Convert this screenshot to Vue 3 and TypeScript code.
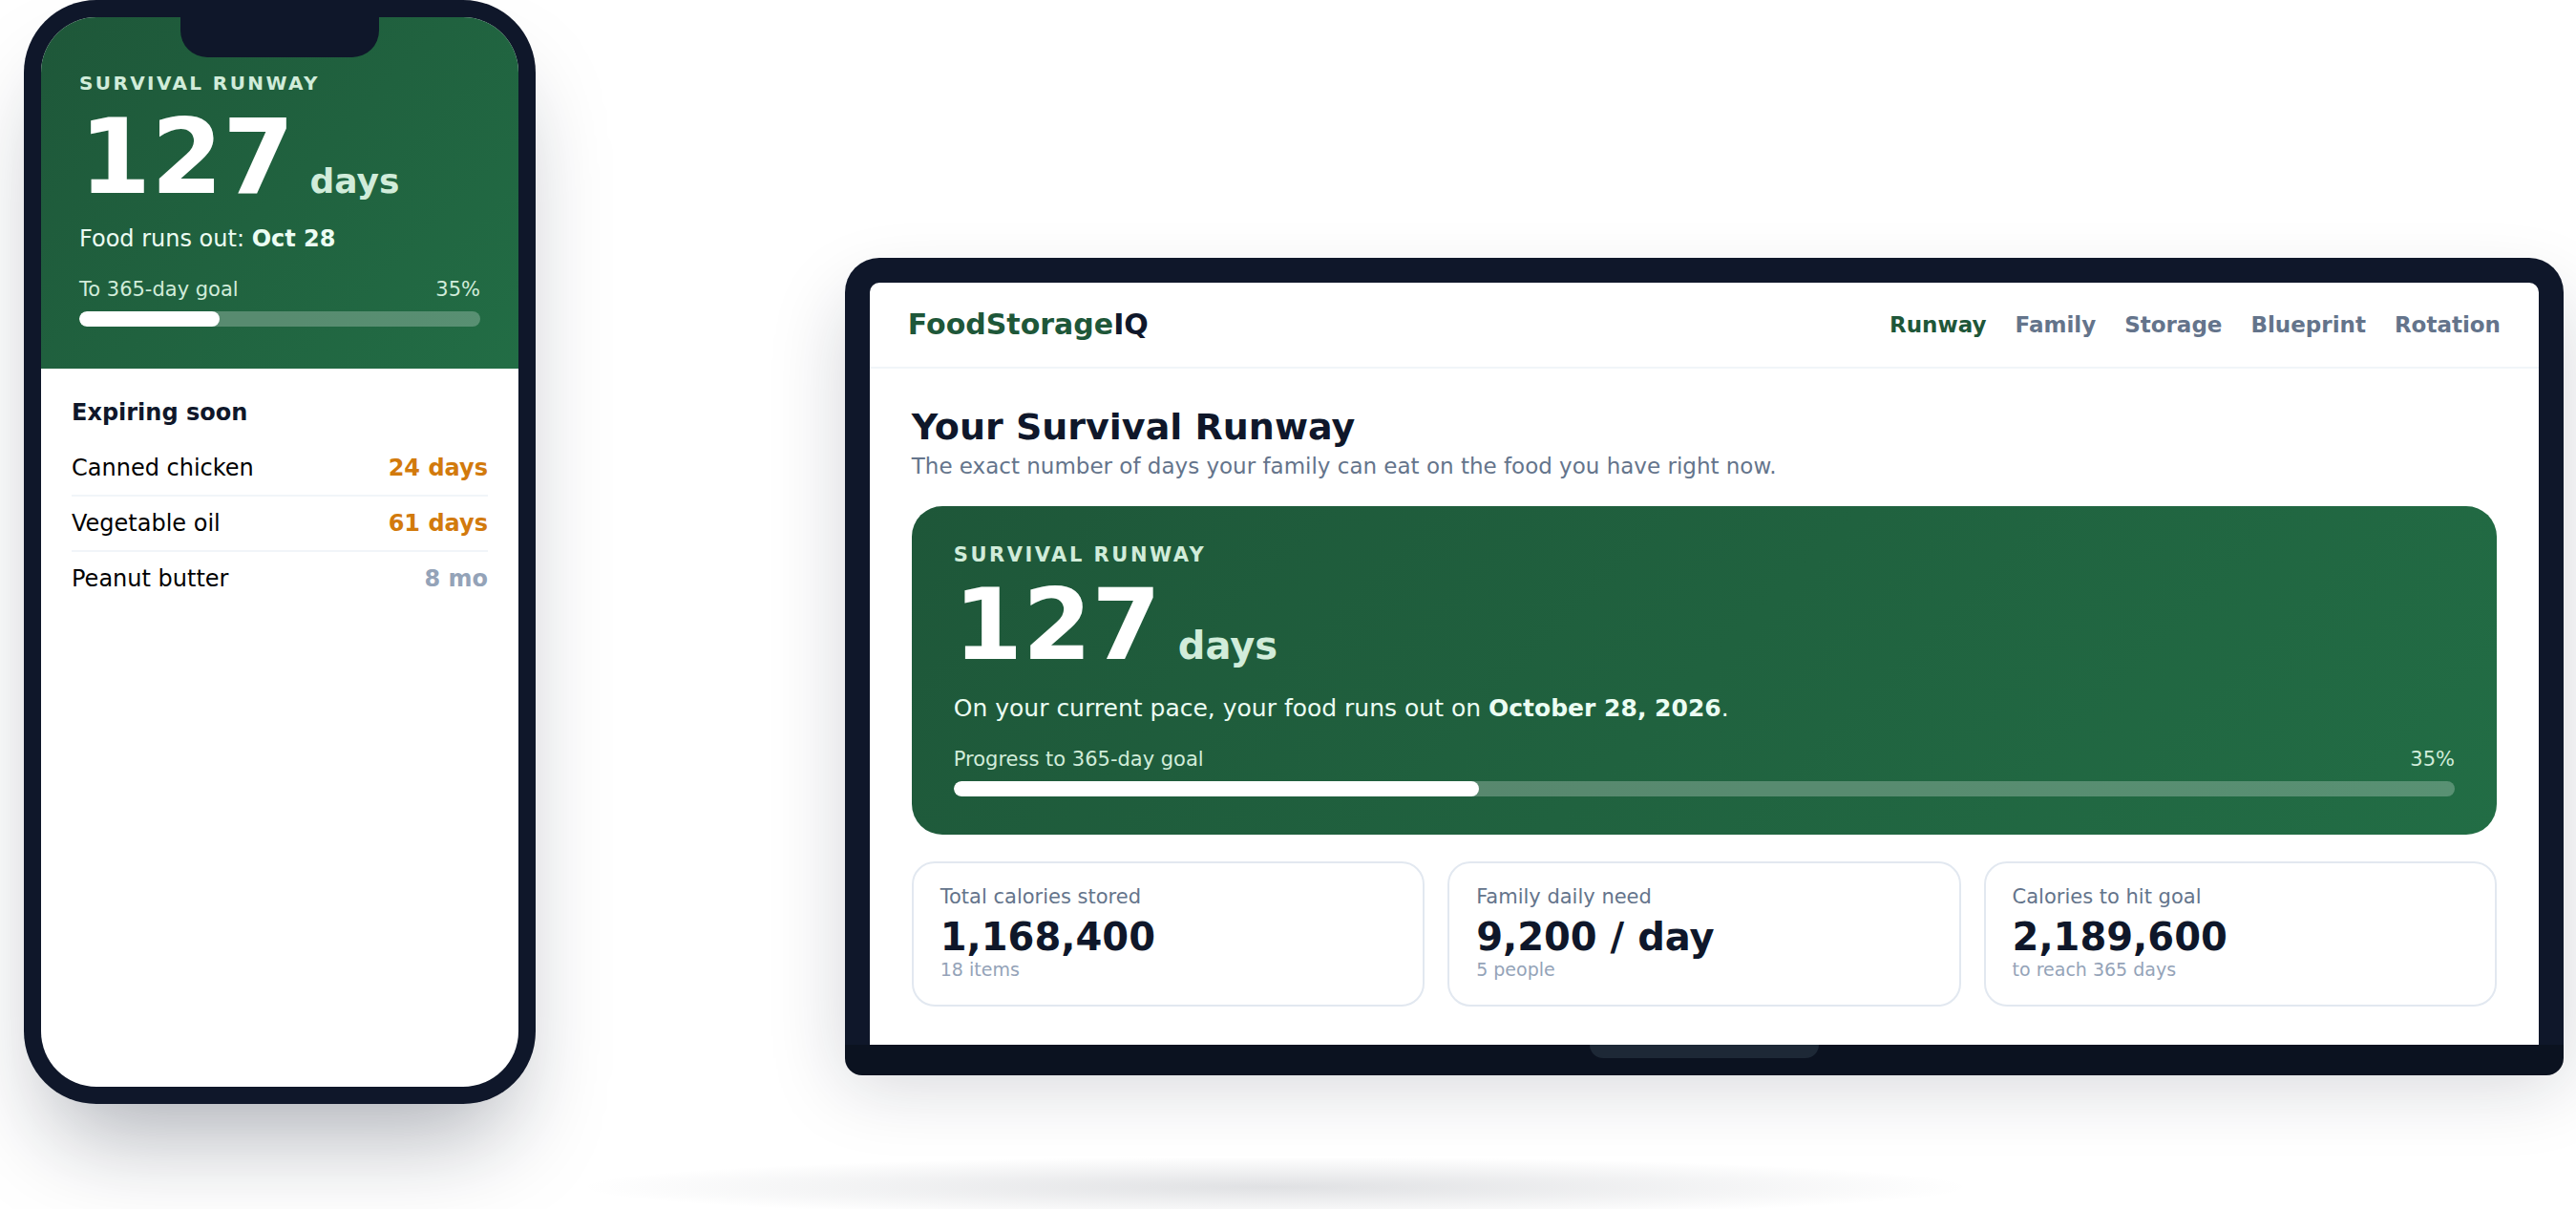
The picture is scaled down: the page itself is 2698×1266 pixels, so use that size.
<script setup lang="ts">
interface NavLink {
  label: string
  href: string
  active?: boolean
}

interface ExpiringItem {
  name: string
  left: string
  soon: boolean
}

interface Stat {
  label: string
  value: string
  note: string
}

const goalPercent = 35

const links: NavLink[] = [
  { label: 'Runway', href: '#runway', active: true },
  { label: 'Family', href: '#family' },
  { label: 'Storage', href: '#storage' },
  { label: 'Blueprint', href: '#blueprint' },
  { label: 'Rotation', href: '#rotation' },
]

const expiring: ExpiringItem[] = [
  { name: 'Canned chicken', left: '24 days', soon: true },
  { name: 'Vegetable oil', left: '61 days', soon: true },
  { name: 'Peanut butter', left: '8 mo', soon: false },
]

const stats: Stat[] = [
  { label: 'Total calories stored', value: '1,168,400', note: '18 items' },
  { label: 'Family daily need', value: '9,200 / day', note: '5 people' },
  { label: 'Calories to hit goal', value: '2,189,600', note: 'to reach 365 days' },
]
</script>

<template>
  <main class="stage">
    <div class="floor" aria-hidden="true"></div>

    <section class="phone" aria-label="Phone preview">
      <div class="phone-screen">
        <div class="notch" aria-hidden="true"></div>
        <div class="runway phone-runway">
          <p class="eyebrow">SURVIVAL RUNWAY</p>
          <p class="count"><span>127</span><span class="unit">days</span></p>
          <p class="pace">Food runs out: <strong>Oct 28</strong></p>
          <div class="goal">
            <label for="phone-goal">To 365-day goal</label>
            <span>{{ goalPercent }}%</span>
          </div>
          <progress id="phone-goal" :value="goalPercent" max="100"></progress>
        </div>
        <div class="expiring">
          <h2>Expiring soon</h2>
          <ul>
            <li v-for="item in expiring" :key="item.name">
              <span>{{ item.name }}</span>
              <span class="left" :class="{ soon: item.soon }">{{ item.left }}</span>
            </li>
          </ul>
        </div>
      </div>
    </section>

    <section class="laptop" aria-label="Laptop preview">
      <div class="lid">
        <div class="laptop-screen">
          <header class="topbar">
            <div class="logo">FoodStorage<span>IQ</span></div>
            <nav>
              <a v-for="link in links" :key="link.label" :href="link.href" :class="{ active: link.active }">{{ link.label }}</a>
            </nav>
          </header>
          <div class="content">
            <h1>Your Survival Runway</h1>
            <p class="lead">The exact number of days your family can eat on the food you have right now.</p>
            <div class="runway laptop-runway">
              <p class="eyebrow">SURVIVAL RUNWAY</p>
              <p class="count"><span>127</span><span class="unit">days</span></p>
              <p class="pace">On your current pace, your food runs out on <strong>October 28, 2026</strong>.</p>
              <div class="goal">
                <label for="laptop-goal">Progress to 365-day goal</label>
                <span>{{ goalPercent }}%</span>
              </div>
              <progress id="laptop-goal" :value="goalPercent" max="100"></progress>
            </div>
            <div class="stats">
              <div v-for="stat in stats" :key="stat.label" class="stat">
                <div class="stat-label">{{ stat.label }}</div>
                <div class="stat-value">{{ stat.value }}</div>
                <div class="stat-note">{{ stat.note }}</div>
              </div>
            </div>
          </div>
        </div>
      </div>
      <div class="base"><div class="lip"></div></div>
    </section>
  </main>
</template>

<style>
body {
  margin: 0;
  background: #fff;
}
</style>

<style scoped>
.stage {
  position: relative;
  box-sizing: border-box;
  display: flex;
  align-items: flex-start;
  gap: 12vw;
  min-height: 100vh;
  padding: 0 13px 110px 25px;
  overflow: hidden;
  font-family: "DejaVu Sans", sans-serif;
  color: #0f172a;
}

h1,
h2,
p,
ul {
  margin: 0;
  padding: 0;
}

/* Soft contact shadow under both devices */
.floor {
  position: absolute;
  left: 18%;
  right: 19%;
  bottom: -14px;
  height: 74px;
  background: radial-gradient(closest-side, rgba(15, 23, 42, 0.13), rgba(15, 23, 42, 0) 86%);
}

/* Phone */
.phone {
  position: relative;
  flex: none;
  box-sizing: border-box;
  width: 536px;
  padding: 18px;
  border-radius: 76px;
  background: #0f172a;
  box-shadow: 0 60px 100px -30px rgba(15, 23, 42, 0.35);
}

.phone-screen {
  position: relative;
  min-height: 1120px;
  border-radius: 58px;
  overflow: hidden;
  background: #fff;
}

.notch {
  position: absolute;
  top: 0;
  left: 50%;
  width: 208px;
  height: 42px;
  margin-left: -104px;
  border-radius: 0 0 28px 28px;
  background: #0f172a;
}

/* Green runway panel, shared by both devices */
.runway {
  background: linear-gradient(135deg, #1e5739, #226d45);
  color: #d1ecda;
}

.phone-runway {
  padding: 57px 40px 44px;
}

.laptop-runway {
  padding: 39px 44px 40px;
  border-radius: 32px;
}

.eyebrow {
  line-height: 24px;
  font-weight: 700;
  letter-spacing: 0.12em;
}

.phone-runway .eyebrow {
  font-size: 20px;
}

.laptop-runway .eyebrow {
  font-size: 21px;
}

.count {
  display: flex;
  align-items: baseline;
  line-height: 1;
  font-weight: 700;
  color: #fff;
}

.phone-runway .count {
  gap: 16px;
  margin-top: 12px;
  font-size: 108px;
}

.laptop-runway .count {
  gap: 18px;
  margin-top: 9px;
  font-size: 104px;
}

.unit {
  color: #d1ecda;
}

.phone-runway .unit {
  font-size: 36px;
}

.laptop-runway .unit {
  font-size: 40px;
}

.pace {
  color: #ecfdf3;
}

.phone-runway .pace {
  margin-top: 17px;
  font-size: 24px;
  line-height: 28px;
}

.laptop-runway .pace {
  margin-top: 20px;
  font-size: 25px;
  line-height: 31px;
}

.goal {
  display: flex;
  justify-content: space-between;
  font-size: 21px;
  line-height: 24px;
}

.phone-runway .goal {
  margin-top: 27px;
}

.laptop-runway .goal {
  margin-top: 26px;
}

progress {
  display: block;
  width: 100%;
  height: 16px;
  margin-top: 11px;
  border: 0;
  border-radius: 8px;
  overflow: hidden;
  appearance: none;
  background: rgba(255, 255, 255, 0.25);
}

progress::-webkit-progress-bar {
  background: transparent;
}

progress::-webkit-progress-value {
  border-radius: 8px;
  background: #fff;
}

/* Expiring list */
.expiring {
  padding: 32px;
  font-size: 24px;
  line-height: 28px;
  color: #000;
}

.expiring h2 {
  margin-bottom: 16px;
  font-size: 24px;
  line-height: 28px;
  color: #0f172a;
}

.expiring ul {
  list-style: none;
}

.expiring li {
  display: flex;
  justify-content: space-between;
  padding: 14px 0;
  border-bottom: 2px solid #f1f5f9;
}

.expiring li:last-child {
  border-bottom: 0;
}

.left {
  font-weight: 700;
  color: #94a3b8;
}

.left.soon {
  color: #d27a0c;
}

/* Laptop */
.laptop {
  position: relative;
  flex: 1;
  min-width: 0;
  margin-top: 270px;
}

.lid {
  padding: 26px 26px 0;
  border-radius: 36px 36px 0 0;
  background: #0f172a;
  box-shadow: 0 40px 80px rgba(15, 23, 42, 0.18);
}

.laptop-screen {
  border-radius: 10px 10px 0 0;
  background: #fff;
}

.base {
  position: relative;
  height: 32px;
  border-radius: 0 0 18px 18px;
  background: #0b1220;
}

.lip {
  width: 240px;
  height: 14px;
  margin: 0 auto;
  border-radius: 0 0 14px 14px;
  background: #1d2836;
}

.topbar {
  display: flex;
  align-items: center;
  justify-content: space-between;
  box-sizing: border-box;
  height: 90px;
  padding: 0 40px;
  border-bottom: 2px solid #f1f5f9;
}

.logo {
  font-size: 30px;
  line-height: 36px;
  font-weight: 700;
  color: #1e5739;
}

.logo span {
  color: #0f172a;
}

nav {
  display: flex;
  gap: 30px;
  font-size: 23px;
  line-height: 28px;
  font-weight: 700;
}

nav a {
  color: #64748b;
  text-decoration: none;
}

nav a.active {
  color: #1e5739;
}

.content {
  padding: 40px 44px;
}

h1 {
  font-size: 38px;
  line-height: 42px;
}

.lead {
  margin: 6px 0 28px;
  font-size: 23px;
  line-height: 28px;
  color: #64748b;
}

.stats {
  display: grid;
  grid-template-columns: repeat(3, 1fr);
  gap: 24px;
  margin-top: 28px;
}

.stat {
  padding: 23px 28px 26px;
  border: 2px solid #e2e8f0;
  border-radius: 24px;
}

.stat-label {
  margin-bottom: 8px;
  font-size: 21px;
  line-height: 24px;
  color: #64748b;
}

.stat-value {
  font-size: 40px;
  line-height: 45px;
  font-weight: 700;
}

.stat-note {
  font-size: 19px;
  line-height: 22px;
  color: #94a3b8;
}
</style>
